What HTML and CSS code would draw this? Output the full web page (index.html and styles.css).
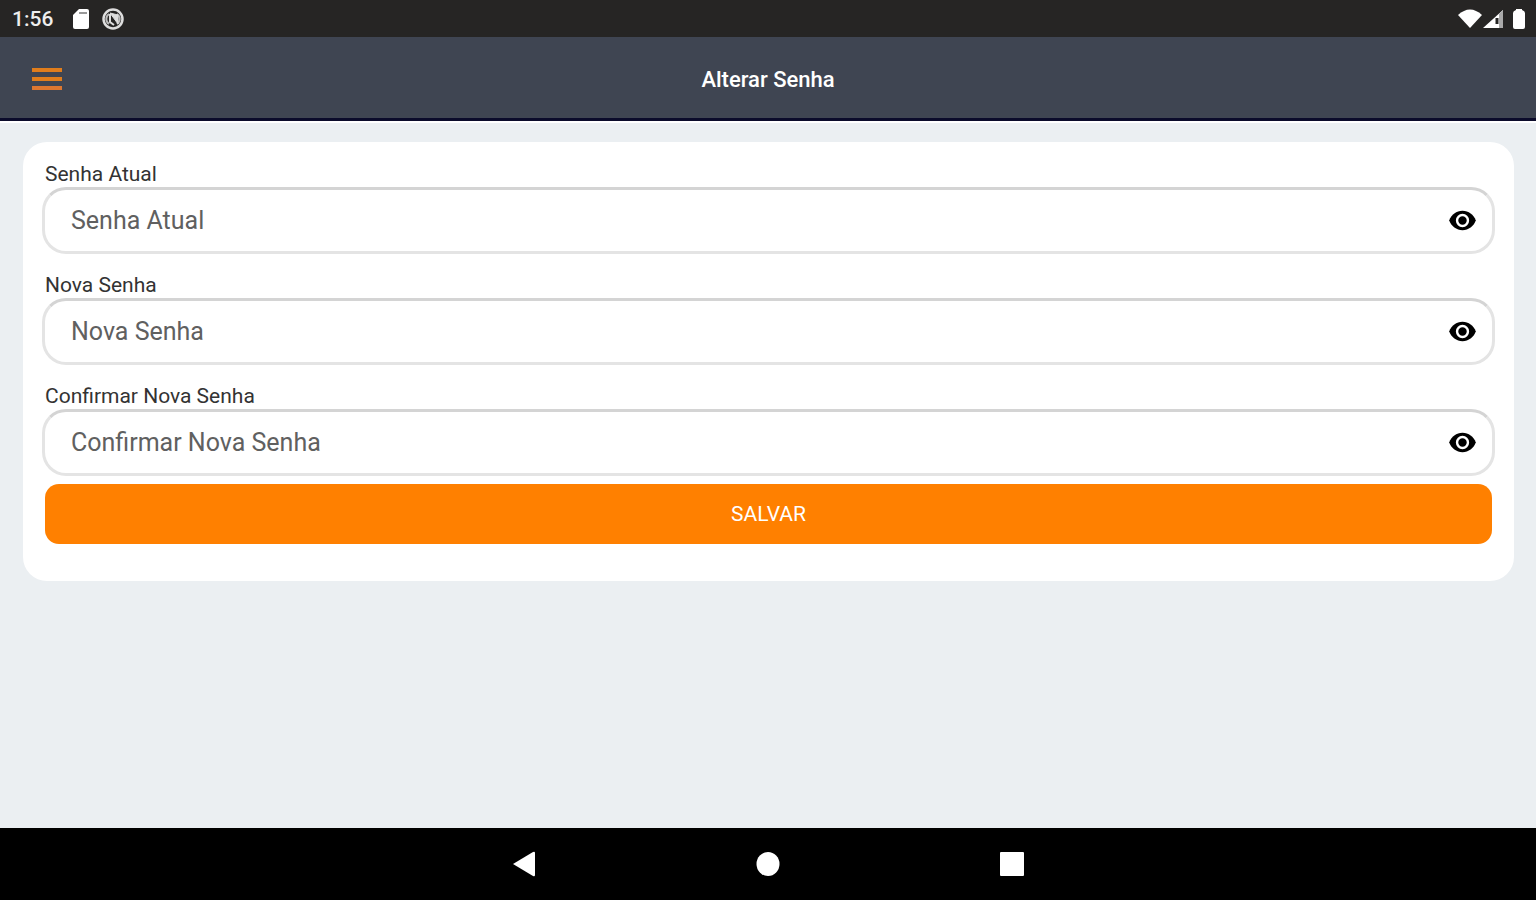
FILE: index.html
```html
<!DOCTYPE html>
<html lang="pt-BR">
<head>
    <meta charset="UTF-8">
    <meta name="viewport" content="width=device-width, initial-scale=1.0">
    <title>Alterar Senha</title>
    <link rel="stylesheet" href="styles.css">
</head>
<body>

    <div class="status-bar">
        <div class="status-left">
            <span class="clock">1:56</span>
            <svg class="status-icon" viewBox="0 0 24 24" aria-hidden="true">
                <path fill="#fff" d="M10 2h8a2 2 0 0 1 2 2v16a2 2 0 0 1-2 2H6a2 2 0 0 1-2-2V8z"/>
                <path stroke="#999" stroke-width="2" d="M10 6h8"/>
            </svg>
            <svg class="status-icon" viewBox="0 0 24 24" fill="none" stroke="#ddd" aria-hidden="true">
                <circle cx="12" cy="12" r="9.500" stroke-width="2.500"/>
                <path stroke="#bbb" stroke-width="2" d="M8 17A6 6 0 0 1 8 7M16 17A6 6 0 0 0 16 7"/>
                <path fill="#ddd" stroke-width="1" d="M9 6l8 2v9z"/>
                <path stroke-width="2" d="M9 7v8l4 3"/>
            </svg>
        </div>
        <div class="status-right">
            <svg width="24" height="20" viewBox="0 0 24 20" aria-hidden="true">
                <path fill="#fff" d="M12 19L0 6Q12-5 24 6z"/>
            </svg>
            <svg class="signal-icon" width="22" height="20" viewBox="0 0 22 20" aria-hidden="true">
                <path fill="#fff" d="M1 19L21 1v18z"/>
                <path fill="#aaa" d="M17 5l4-4v18h-4z"/>
                <path stroke="#262524" stroke-width="3" fill="none" d="M15 9v6"/>
            </svg>
            <svg width="14" height="20" viewBox="0 0 14 20" aria-hidden="true">
                <path fill="#fff" d="M4 0h6v1q3 1 3 3v14q0 2-2 2H3q-2 0-2-2V4q0-2 3-3z"/>
            </svg>
        </div>
    </div>

    <header class="header">
        <button class="menu-button" type="button" aria-label="Menu">
            <svg width="30" height="22" viewBox="0 0 30 22" aria-hidden="true">
                <path stroke="#e07d1c" stroke-width="4" d="M0 2h30M0 11h30"/>
                <path stroke="#dd7730" stroke-width="4" d="M0 20h30"/>
            </svg>
        </button>
        <h1>Alterar Senha</h1>
    </header>

    <main class="content">
        <form class="card">
            <div class="field">
                <label for="senha-atual">Senha Atual</label>
                <div class="input-box">
                    <input type="password" id="senha-atual" placeholder="Senha Atual">
                    <button class="eye-button" type="button" aria-label="Mostrar senha">
                        <svg viewBox="0 0 24 24" aria-hidden="true"><use href="#eye"/></svg>
                    </button>
                </div>
            </div>

            <div class="field">
                <label for="nova-senha">Nova Senha</label>
                <div class="input-box">
                    <input type="password" id="nova-senha" placeholder="Nova Senha">
                    <button class="eye-button" type="button" aria-label="Mostrar senha">
                        <svg viewBox="0 0 24 24" aria-hidden="true"><use href="#eye"/></svg>
                    </button>
                </div>
            </div>

            <div class="field">
                <label for="confirmar-senha">Confirmar Nova Senha</label>
                <div class="input-box">
                    <input type="password" id="confirmar-senha" placeholder="Confirmar Nova Senha">
                    <button class="eye-button" type="button" aria-label="Mostrar senha">
                        <svg viewBox="0 0 24 24" aria-hidden="true"><use href="#eye"/></svg>
                    </button>
                </div>
            </div>

            <button class="save-button" type="button">SALVAR</button>
        </form>
    </main>

    <nav class="nav-bar">
        <button type="button" aria-label="Voltar">
            <svg width="24" height="26" viewBox="0 0 24 26" aria-hidden="true"><path fill="#fff" d="M1 13L21 1q2-1 2 1v22q0 2-2 1z"/></svg>
        </button>
        <button type="button" aria-label="Início">
            <svg width="24" height="26" viewBox="0 0 24 26" aria-hidden="true"><ellipse fill="#fff" cx="12" cy="13" rx="11.500" ry="12"/></svg>
        </button>
        <button type="button" aria-label="Recentes">
            <svg width="24" height="26" viewBox="0 0 24 26" aria-hidden="true"><rect fill="#fff" y="1" width="24" height="24" rx="1"/></svg>
        </button>
    </nav>

    <svg width="0" height="0" class="sprite" aria-hidden="true">
        <symbol id="eye" viewBox="0 0 24 24">
            <path d="M12 4C7 4 2.730 7.300 1 12c1.730 4.700 6 8 11 8s9.270-3.300 11-8c-1.730-4.700-6-8-11-8z"/>
            <circle cx="12" cy="12" r="4.500" fill="none" stroke="#fff" stroke-width="2"/>
            <circle cx="12" cy="12" r="2.500"/>
        </symbol>
    </svg>

</body>
</html>
```

FILE: styles.css
```css
* {
    box-sizing: border-box;
}

body {
    font-family: Roboto, sans-serif;
    margin: 0;
    min-height: 100vh;
    display: flex;
    flex-direction: column;
    background-color: #ebeff2;
    color: #333;
}

button {
    font-family: inherit;
    border: none;
    background: none;
    padding: 0;
    cursor: pointer;
}

svg {
    display: block;
}

.sprite {
    position: absolute;
}

/* Status bar */
.status-bar {
    display: flex;
    justify-content: space-between;
    align-items: center;
    height: 37px;
    padding: 0 10px 0 12px;
    background-color: #262524;
    color: #eee;
}

.status-left {
    display: flex;
    align-items: center;
    gap: 8px;
}

.clock {
    font-size: 21px;
    font-weight: 500;
    margin-right: 8px;
}

.status-icon {
    width: 24px;
    height: 24px;
}

.status-right {
    display: flex;
    align-items: center;
}

.signal-icon {
    margin-right: 8px;
}

/* Header */
.header {
    display: grid;
    grid-template-columns: 1fr auto 1fr;
    align-items: center;
    height: 86px;
    padding: 0 32px;
    background-color: #3f4552;
    border-bottom: 2px solid #fff;
    box-shadow: inset 0 -3px 0 #0b0b2b;
}

.menu-button {
    justify-self: start;
}

.header h1 {
    margin: 0;
    font-size: 22px;
    font-weight: 500;
    color: #fff;
}

/* Form card */
.content {
    flex: 1;
    padding: 19px 22px 20px 23px;
}

.card {
    display: flex;
    flex-direction: column;
    padding: 19px 19px 37px;
    background-color: #fff;
    border-radius: 24px;
}

.field {
    margin-bottom: 18px;
}

.field:nth-child(3) {
    margin-bottom: 8px;
}

.field label {
    display: block;
    padding-left: 3px;
    font-size: 21px;
    line-height: 26px;
}

.input-box {
    display: flex;
    align-items: center;
    height: 67px;
    padding: 0 15px 0 26px;
    border: 3px solid #e4e4e4;
    border-top-color: #d4d4d4;
    border-radius: 24px;
}

.input-box input {
    flex: 1;
    min-width: 0;
    padding: 0;
    border: none;
    outline: none;
    background: none;
    font-family: inherit;
    font-size: 25px;
    color: #333;
}

.input-box input::placeholder {
    color: #606060;
    opacity: 1;
}

.eye-button svg {
    width: 29px;
    height: 29px;
}

.save-button {
    height: 60px;
    margin: 0 3px;
    border-radius: 14px;
    background-color: #ff8000;
    color: #fff;
    font-size: 21px;
}

/* Navigation bar */
.nav-bar {
    display: flex;
    justify-content: center;
    align-items: center;
    gap: 196px;
    height: 72px;
    background-color: #000;
}

.nav-bar button {
    display: flex;
    justify-content: center;
    width: 48px;
}
```
